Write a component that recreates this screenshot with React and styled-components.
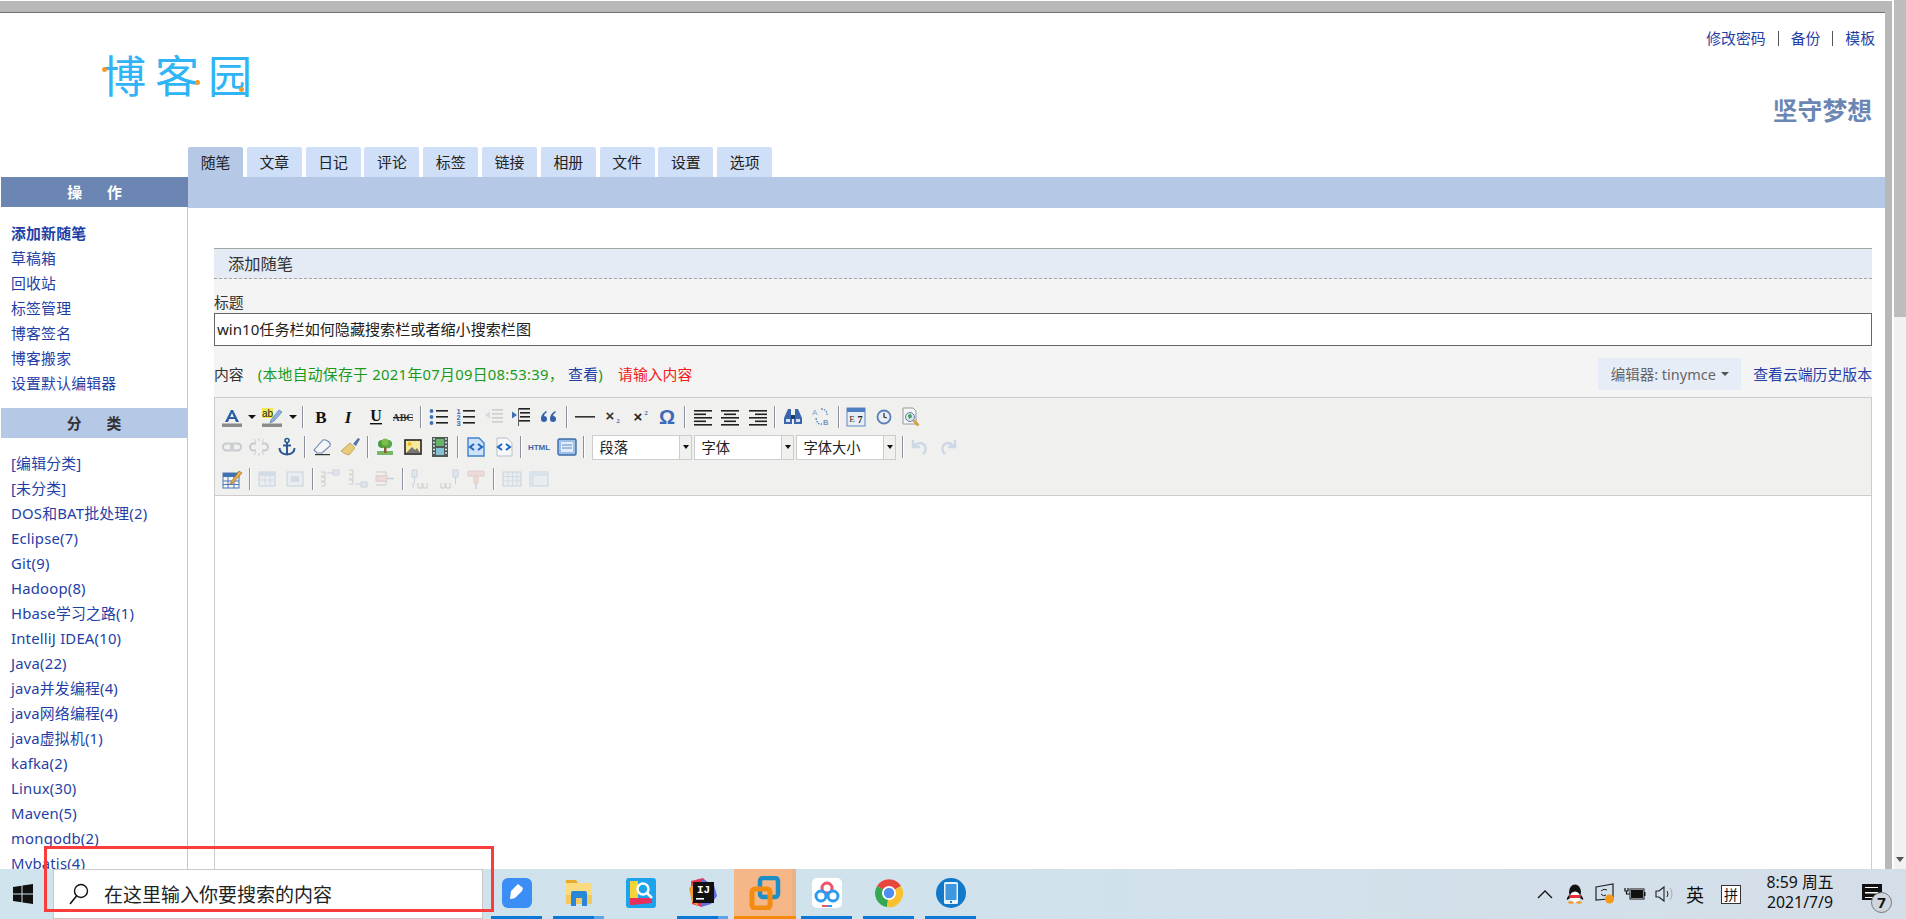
import React from 'react';
import styled, { createGlobalStyle } from 'styled-components';

const GlobalStyle = createGlobalStyle`
  html, body {
    margin: 0;
    padding: 0;
    height: 100%;
    overflow: hidden;
    background: #fff;
    font-family: "Noto Sans", "Noto Sans CJK SC", sans-serif;
  }
  #root { height: 100%; }
  * { box-sizing: border-box; }
`;

const Screen = styled.div`
  position: relative;
  height: 919px;
  width: 1906px;
  display: flex;
  flex-direction: column;
  overflow: hidden;
  background: #fff;
`;

const Desktop = styled.div`
  flex: 1;
  min-height: 0;
  display: flex;
`;

const Frame = styled.div`
  width: 1892px;
  margin-top: 1px;
  display: flex;
  flex-direction: column;
  background: #b8b8b8;
  padding: 11px 7px 0 0;
  min-height: 0;
`;

const Page = styled.div`
  flex: 1;
  min-height: 0;
  background: #fff;
  border-top: 1px solid #707070;
  display: flex;
  flex-direction: column;
  font-size: 14.85px;
  line-height: 25px;
  color: #333;
`;

const Scrollbar = styled.div`
  width: 12px;
  margin-left: 2px;
  background: #f1f1f1;
  position: relative;
`;

const ScrollThumb = styled.div`
  height: 317px;
  background: #bdbdbd;
`;

const ScrollArrow = styled.div`
  position: absolute;
  left: 2px;
  bottom: 7px;
  border-left: 4px solid transparent;
  border-right: 4px solid transparent;
  border-top: 5px solid #555;
`;

const Header = styled.div`
  height: 134px;
  flex: none;
  display: flex;
  justify-content: space-between;
  padding: 0 10px 0 102px;
`;

const Logo = styled.div`
  position: relative;
  margin-top: 35px;
  width: 150px;
  height: 56px;
  font-size: 44px;
  line-height: 56px;
  letter-spacing: 9px;
  font-weight: 400;
  color: #2fb4f6;
  white-space: nowrap;
`;

const LogoDot = styled.i`
  position: absolute;
  width: 5px;
  height: 5px;
  border-radius: 50%;
  background: #f89a2c;
  left: ${p => p.$x}px;
  top: ${p => p.$y}px;
`;

const HeaderRight = styled.div`
  display: flex;
  flex-direction: column;
  align-items: flex-end;
`;

const TopLinks = styled.div`
  margin-top: 13px;
  display: flex;
  align-items: center;
  height: 25px;
`;

const TopSep = styled.span`
  width: 1px;
  height: 15px;
  background: #555;
  margin: 0 12px;
`;

const Link = styled.a`
  color: #1f3fa6;
  text-decoration: none;
  font-weight: ${p => (p.$bold ? 700 : 400)};
  white-space: nowrap;
`;

const BlogTitle = styled.div`
  margin: 42px 3px 0 0;
  font-size: 24.8px;
  line-height: 34px;
  font-weight: 700;
  color: #6b86b2;
`;

const Tabs = styled.div`
  flex: none;
  display: flex;
  gap: 3.8px;
  height: 30px;
  padding-left: 188px;
`;

const Tab = styled.div`
  width: 55px;
  height: 30px;
  text-align: center;
  line-height: 31px;
  border-radius: 2px 2px 0 0;
  color: #222;
  background: ${p => (p.$active ? '#b5c8e6' : '#cfdff7')};
`;

const Body = styled.div`
  flex: 1;
  min-height: 0;
  display: flex;
  overflow: hidden;
`;

const Sidebar = styled.div`
  width: 188px;
  flex: none;
  padding-left: 1px;
  border-right: 1px solid #b5c8e6;
`;

const SideHead = styled.div`
  height: 30px;
  line-height: 30px;
  text-align: center;
  font-weight: 700;
  letter-spacing: 25px;
  text-indent: 25px;
  color: ${p => (p.$dark ? '#fff' : '#333')};
  background: ${p => (p.$dark ? '#6b86b2' : '#b5c8e6')};
  margin-right: ${p => (p.$dark ? '-1px' : '0')};
`;

const SideList = styled.div`
  display: flex;
  flex-direction: column;
  padding: ${p => p.$top}px 0 ${p => 26 - p.$top}px 10px;
  letter-spacing: .2px;
`;

const Content = styled.div`
  flex: 1;
  min-width: 0;
  display: flex;
  flex-direction: column;
`;

const BlueBand = styled.div`
  height: 31px;
  flex: none;
  background: #b5c8e6;
`;

const Main = styled.div`
  flex: 1;
  margin: 40px 13px 0 26px;
  background: #f4f4f4;
  display: flex;
  flex-direction: column;
`;

const SectionTitle = styled.div`
  height: 31px;
  background: #e4ebf5;
  border-top: 1px solid #a5a5a5;
  border-bottom: 1px dashed #a5a5a5;
  padding-left: 14px;
  font-size: 16.3px;
  line-height: 30px;
  color: #333;
`;

const FieldLabel = styled.div`
  margin-top: 10px;
  height: 24px;
  line-height: 26px;
`;

const TitleInput = styled.div`
  height: 33px;
  border: 1px solid #666;
  background: #fff;
  padding-left: 2px;
  font-size: 15.1px;
  line-height: 30px;
  color: #222;
`;

const MetaRow = styled.div`
  height: 51px;
  padding: 12px 0 7px;
  display: flex;
  align-items: center;
  white-space: nowrap;
`;

const SaveNote = styled.span`
  margin-left: 14px;
  letter-spacing: .27px;
  color: #1a9a1a;
`;

const ErrorNote = styled.span`
  margin-left: 15px;
  color: #f21c1c;
`;

const EditorPick = styled.div`
  margin-left: auto;
  width: 143px;
  height: 32px;
  background: #e6edf7;
  display: flex;
  align-items: center;
  justify-content: center;
  gap: 5px;
  color: #666;
  font-size: 14.5px;
`;

const PickCaret = styled.i`
  border-left: 4px solid transparent;
  border-right: 4px solid transparent;
  border-top: 4px solid #555;
`;

const HistoryLink = styled(Link)`
  margin-left: 12px;
  font-size: 14.85px;
`;

const Editor = styled.div`
  flex: 1;
  border: 1px solid #ccc;
  border-bottom: 0;
  background: #fff;
`;

const Toolbar = styled.div`
  height: 98px;
  background: #f0f0ee;
  border-bottom: 1px solid #ccc;
  padding: 4px 0 0 3px;
`;

const ToolRow = styled.div`
  height: ${p => p.$h}px;
  display: flex;
  align-items: center;
`;

const ToolBtn = styled.span`
  width: 27.5px;
  height: 22px;
  flex: none;
  display: flex;
  align-items: center;
  justify-content: center;
  opacity: ${p => (p.$off ? 0.35 : 1)};
`;

const ToolCaret = styled.span`
  width: 13px;
  flex: none;
  display: flex;
  justify-content: center;
  &::before {
    content: "";
    border-left: 4px solid transparent;
    border-right: 4px solid transparent;
    border-top: 4px solid #111;
  }
`;

const ToolSep = styled.span`
  width: 8.1px;
  height: 22px;
  flex: none;
  display: flex;
  justify-content: center;
  &::before {
    content: "";
    width: 2px;
    background: linear-gradient(90deg, #8d8fa0 50%, #fff 50%);
  }
`;

const Select = styled.div`
  width: 100px;
  height: 25px;
  flex: none;
  margin-right: 2px;
  display: flex;
  border: 1px solid #ccc;
  background: #fff;
  font-size: 14.3px;
  line-height: 23px;
  color: #222;
  ${p => p.$first && 'margin-left: 4px;'}
`;

const SelectText = styled.span`
  flex: 1;
  padding-left: 6px;
`;

const SelectBtn = styled.span`
  width: 12px;
  background: #f0f0ee;
  border-left: 1px solid #ccc;
  display: flex;
  align-items: center;
  justify-content: center;
  &::before {
    content: "";
    border-left: 3.5px solid transparent;
    border-right: 3.5px solid transparent;
    border-top: 4px solid #111;
  }
`;

const Taskbar = styled.div`
  height: 50px;
  flex: none;
  display: flex;
  background: linear-gradient(90deg, #cfe4ec 0%, #d0e2ec 45%, #d4dee9 100%);
`;

const StartBtn = styled.div`
  width: 53px;
  flex: none;
  display: flex;
  align-items: center;
  justify-content: center;
  padding-right: 8px;
`;

const SearchBox = styled.div`
  width: 430px;
  flex: none;
  display: flex;
  align-items: center;
  gap: 14px;
  background: #fff;
  border: 1px solid #c9c9c9;
  padding-left: 14px;
  font-size: 19px;
  color: #222;
`;

const Tiles = styled.div`
  display: flex;
  margin-left: 3px;
`;

const Tile = styled.div`
  position: relative;
  width: 62px;
  display: flex;
  align-items: center;
  justify-content: center;
  padding-bottom: 3px;
  background: ${p => (p.$active ? '#f5b688' : 'transparent')};
  ${p => p.$active && 'border-right: 4px solid #ecb083; padding-left: 4px;'}
`;

const TileBar = styled.i`
  position: absolute;
  bottom: 0;
  height: 3px;
  left: ${p => (p.$active ? 0 : 5)}px;
  right: ${p => (p.$active ? -4 : 6)}px;
  background: ${p => (p.$active ? '#f8890f' : p.$stack ? 'linear-gradient(90deg, #0a78d7 80%, #5aa6e8 80%)' : '#0a78d7')};
`;

const Tray = styled.div`
  margin-left: auto;
  display: flex;
  align-items: center;
  color: #111;
`;

const TrayIcon = styled.div`
  width: ${p => p.$w || 30}px;
  display: flex;
  justify-content: center;
  font-size: 18px;
`;

const ImeBox = styled.div`
  width: 20px;
  height: 19px;
  margin: 0 0 0 11px;
  border: 1px solid #333;
  background: #fff;
  font-size: 14px;
  line-height: 17px;
  text-align: center;
`;

const Clock = styled.div`
  width: 92px;
  margin-left: 13px;
  padding-bottom: 4px;
  text-align: center;
  font-size: 15.8px;
  line-height: 20px;
`;

const Notify = styled.div`
  position: relative;
  width: 60px;
  height: 50px;
`;

const NotifyBubble = styled.i`
  position: absolute;
  left: 16px;
  top: 15px;
  width: 20px;
  height: 16px;
  background: #111;
  &::after {
    content: "";
    position: absolute;
    left: 3px;
    top: 3px;
    width: 13px;
    height: 9px;
    border-top: 1.5px solid #fff;
    border-bottom: 1.5px solid #fff;
    background: linear-gradient(#fff, #fff) center / 100% 1.5px no-repeat;
  }
`;

const NotifyBadge = styled.b`
  position: absolute;
  left: 25px;
  top: 23px;
  width: 21px;
  height: 21px;
  border-radius: 50%;
  border: 1px solid #777;
  background: #cfd6de;
  color: #111;
  text-align: center;
  font-size: 15px;
  line-height: 19px;
`;

const RedBox = styled.div`
  position: absolute;
  left: 44px;
  top: 846px;
  width: 450px;
  height: 66px;
  border: 3px solid #f93c3c;
  pointer-events: none;
`;

const S = ({ children, size = 20 }) => (
  <svg width={size} height={size} viewBox="0 0 20 20">{children}</svg>
);

const lines = (rows, color = '#222') => rows.map(([x, y, w], i) => (
  <rect key={i} x={x} y={y} width={w} height="1.6" fill={color} />
));

const t = (x, y, str, size, extra = {}) => (
  <text x={x} y={y} fontSize={size} fontFamily="Liberation Serif, serif" textAnchor="middle" {...extra}>{str}</text>
);

const tableIcon = (fill = '#9fb6d6') => (
  <g>
    <rect x="2" y="3" width="16" height="14" fill="#dfe8f4" stroke="#7f9bc0" />
    <rect x="2" y="3" width="16" height="4" fill={fill} />
    <path d="M2 11h16M8 7v10M13 7v10" stroke="#9fb6d6" />
  </g>
);

const gridDiagram = (d, d2, color = '#8a8a8a') => (
  <g fill="none" stroke={color}>
    <path d={d} />
    <path d={d2} stroke="#7f9bc0" fill="#c5d6ec" />
  </g>
);

const icons = {
  forecolor: <S><path d="M3 15L9 3h2l6 12h-3l-1.3-3H7.3L6 15zM8.2 10h3.6L10 6z" fill="#2d5ea8" /><rect x="0" y="16.5" width="20" height="3.5" fill="#8c8c8c" /></S>,
  backcolor: <S><rect x="0" y="1" width="11" height="10" fill="#f2ea55" />{t(5.5, 9.5, 'ab', 10, { fontFamily: 'Liberation Sans, sans-serif', fill: '#222' })}<path d="M9 13l8-10 3 2-8 9-4 2z" fill="#8fb2de" stroke="#4d78b5" strokeWidth=".7" /><rect x="0" y="16.5" width="20" height="3.5" fill="#8c8c8c" /></S>,
  bold: <S>{t(10, 16, 'B', 17, { fontWeight: 700, fill: '#111' })}</S>,
  italic: <S>{t(10, 16, 'I', 17, { fontWeight: 700, fontStyle: 'italic', fill: '#111' })}</S>,
  underline: <S>{t(10, 14, 'U', 16, { fontWeight: 700, fill: '#111' })}<rect x="4" y="16" width="12" height="1.4" fill="#111" /></S>,
  strike: <S>{t(10, 14, 'ABC', 10, { fontWeight: 700, fill: '#333' })}<rect x="0" y="10" width="20" height="1" fill="#222" /></S>,
  bullist: <S><circle cx="2.5" cy="4" r="1.9" fill="#3f6fb5" /><circle cx="2.5" cy="10" r="1.9" fill="#3f6fb5" /><circle cx="2.5" cy="16" r="1.9" fill="#3f6fb5" />{lines([[7, 3, 12], [7, 9, 12], [7, 15, 12]])}</S>,
  numlist: <S>{['1', '2', '3'].map((n, i) => <text key={n} x="0.5" y={6.5 + i * 6} fontSize="7.5" fontWeight="700" fill="#3f6fb5" fontFamily="Liberation Sans, sans-serif">{n}</text>)}{lines([[7, 3, 12], [7, 9, 12], [7, 15, 12]])}</S>,
  outdent: <S><g opacity=".45">{lines([[8, 2, 11], [8, 6, 11], [8, 10, 11], [8, 14, 11]])}<path d="M1 8l5-3.5v7z" fill="#3f6fb5" /></g></S>,
  indent: <S>{lines([[7, 1, 12], [9, 5, 10], [9, 9, 10], [7, 13, 12]])}<path d="M6 8L1 4.5v7z" fill="#3f6fb5" /><rect x="7" y="1" width="1" height="18" fill="#666" /></S>,
  quote: <S><path d="M7 4Q2 7 2 12a3 3 0 1 0 3-3q0-2 3-4zM16 4q-5 3-5 8a3 3 0 1 0 3-3q0-2 3-4z" fill="#3560a8" /></S>,
  hr: <S><rect x="0" y="9" width="20" height="1.6" fill="#333" /></S>,
  sub: <S>{t(8, 14, '×', 15, { fontWeight: 700, fill: '#333', fontFamily: 'Liberation Sans, sans-serif' })}{t(16, 16, '2', 7, { fontWeight: 700, fill: '#3f6fb5' })}</S>,
  sup: <S>{t(8, 15, '×', 15, { fontWeight: 700, fill: '#222', fontFamily: 'Liberation Sans, sans-serif' })}{t(16, 8, '2', 7, { fontWeight: 700, fill: '#3f6fb5' })}</S>,
  omega: <S>{t(10, 17, 'Ω', 20, { fontWeight: 700, fill: '#3b69b8', fontFamily: 'Liberation Sans, sans-serif' })}</S>,
  left: <S>{lines([[1, 3, 18], [1, 6.5, 12], [1, 10, 18], [1, 13.5, 12], [1, 17, 18]])}</S>,
  center: <S>{lines([[1, 3, 18], [4, 6.5, 12], [1, 10, 18], [4, 13.5, 12], [1, 17, 18]])}</S>,
  right: <S>{lines([[1, 3, 18], [7, 6.5, 12], [1, 10, 18], [7, 13.5, 12], [1, 17, 18]])}</S>,
  search: <S><path d="M5 2h3v6l1 2v7H1v-6zM12 2h3l4 9v6h-8v-7l1-2z" fill="#3a66ad" /><rect x="8" y="8" width="4" height="4" fill="#1e3c70" /><rect x="3" y="12" width="4" height="3" fill="#cfe0f5" /><rect x="13" y="12" width="4" height="3" fill="#cfe0f5" /></S>,
  replace: <S><g fill="#7fa3d8" fontFamily="Liberation Sans, sans-serif" fontSize="8"><text x="1" y="8">A</text><text x="12" y="18" fill="#3f6fb5">B</text></g><path d="M5 11q1 7 6 6M10 2q6 0 6 6" fill="none" stroke="#4e7dc4" strokeDasharray="1.6 1.2" strokeWidth="1.3" /></S>,
  date: <S><rect x="1" y="1" width="18" height="18" fill="#e9eef6" stroke="#5e86bd" /><rect x="1" y="1" width="18" height="4" fill="#4f7fc0" />{t(6, 15, 'E', 9, { fill: '#333' })}{t(14, 16, '7', 10, { fontWeight: 700, fill: '#222' })}</S>,
  clock: <S><circle cx="10" cy="10" r="6.5" fill="#e8eef8" stroke="#5c7fb6" strokeWidth="1.8" /><path d="M10 6v4l3 1" fill="none" stroke="#333" strokeWidth="1.3" /></S>,
  preview: <S><path d="M2 1h10l3 3v13H2z" fill="#f6f7f9" stroke="#999" /><circle cx="9" cy="10" r="4.5" fill="#d5e5f5" stroke="#6d7f95" /><path d="M7 8l3-1 1 3-3 2z" fill="#3d9c4d" /><path d="M12.5 13.5l5 5" stroke="#d6a240" strokeWidth="2.6" /></S>,
  link: <S><rect x="1" y="6.5" width="10" height="7" rx="3.5" fill="none" stroke="#7c8794" strokeWidth="2" /><rect x="9" y="6.5" width="10" height="7" rx="3.5" fill="none" stroke="#7c8794" strokeWidth="2" /></S>,
  unlink: <S><path d="M7 6.5H4.5a3.5 3.5 0 0 0 0 7H7M13 6.5h2.5a3.5 3.5 0 0 1 0 7H13" fill="none" stroke="#7c8794" strokeWidth="2" /><path d="M10 1v3M10 16v3M5 2l2 3M15 2l-2 3M5 18l2-3M15 18l-2-3" stroke="#888" /></S>,
  anchor: <S><circle cx="10" cy="3.5" r="2" fill="none" stroke="#2d5a94" strokeWidth="1.6" /><path d="M10 5.5V17M6 8.5h8" stroke="#2d5a94" strokeWidth="2" /><path d="M2.5 11q0 6 7.5 6.5q7.5-.5 7.5-6.5" fill="none" stroke="#2d5a94" strokeWidth="2" /></S>,
  eraser: <S><path d="M2 13L11 3q2-1 6 2 2 2 1 4l-8 7H5z" fill="#f5f6f8" stroke="#6a88ad" strokeWidth="1.1" /><rect x="3" y="17" width="15" height="1.2" fill="#333" /></S>,
  brush: <S><path d="M13 7l5-6 2 1-4 7z" fill="#5274a8" /><path d="M1 14l9-8 5 5-6 7q-5-1-8-4z" fill="#e8cb7b" stroke="#b1924a" strokeWidth=".7" /></S>,
  image: <S><rect x="1" y="1" width="18" height="18" fill="#eef3fa" /><path d="M2 14h16v4H2z" fill="#7bb662" /><rect x="9" y="10" width="2.5" height="6" fill="#8a5d30" /><circle cx="7" cy="7" r="4" fill="#4f9d3a" /><circle cx="13" cy="7" r="4.2" fill="#5aa843" /><circle cx="10" cy="5" r="3.5" fill="#7bbf4a" /></S>,
  picture: <S><rect x="2" y="3" width="16" height="14" fill="#f7e99a" stroke="#222" strokeWidth="1.6" /><circle cx="6.5" cy="7" r="2" fill="#f4b92e" /><path d="M3 16l6-6 3 3 2-2 3 5z" fill="#777" /></S>,
  film: <S><rect x="2" y="0" width="16" height="20" fill="#4f5a57" /><rect x="6" y="2" width="8" height="7" fill="#68b36a" /><rect x="6" y="11" width="8" height="7" fill="#86c1d8" /><path d="M3 2h2M3 5.5h2M3 9h2M3 12.5h2M3 16h2M15 2h2M15 5.5h2M15 9h2M15 12.5h2M15 16h2" stroke="#dfe6e6" strokeWidth="1.4" /></S>,
  codeBlue: <S><path d="M2 1h11l5 5v13H2z" fill="#cfe2f8" stroke="#3f82cf" strokeWidth="1.4" /><path d="M8 7l-4 3 4 3M12 7l4 3-4 3" fill="none" stroke="#2067bf" strokeWidth="2" /></S>,
  codeWhite: <S><path d="M3 1h10l5 5v13H3z" fill="#f7f8fa" stroke="#b9c0c9" /><path d="M8 7l-4 3 4 3M12 7l4 3-4 3" fill="none" stroke="#2067bf" strokeWidth="2" /></S>,
  html: <svg width="24" height="20" viewBox="0 0 24 20"><text x="12" y="13" textAnchor="middle" fontSize="8" fontWeight="700" fill="#3a65a6" fontFamily="Liberation Sans, sans-serif">HTML</text></svg>,
  full: <S><rect x="1" y="2" width="18" height="16" rx="1.5" fill="#9fc0e8" stroke="#3a6cab" strokeWidth="1.4" /><rect x="4" y="5" width="12" height="10" fill="#e3edf9" /><path d="M5 8h10M5 11h10" stroke="#5c8ac4" /></S>,
  undo: <S><path d="M3 3v7h7M4 9q7-6 11 0 2 4-2 8" fill="none" stroke="#8daedb" strokeWidth="2.4" /></S>,
  redo: <S><path d="M17 3v7h-7M16 9Q9 3 5 9q-2 4 2 8" fill="none" stroke="#8daedb" strokeWidth="2.4" /></S>,
  tableEdit: <S><rect x="1" y="4" width="16" height="15" fill="#f2f5fa" stroke="#4f78ad" /><rect x="1" y="4" width="16" height="4" fill="#3f71b5" /><path d="M1 12h16M1 15.5h16M6 8v11M12 8v11" stroke="#4f78ad" /><path d="M9 13l8-11 3 2-9 10-3 1z" fill="#e8b04a" stroke="#a46a22" strokeWidth=".7" /></S>,
  tableA: <S>{tableIcon()}</S>,
  tableB: <S><rect x="2" y="3" width="16" height="14" fill="#dfe8f4" stroke="#7f9bc0" /><rect x="6" y="7" width="8" height="6" fill="#9fb6d6" /></S>,
  rowA: <S>{gridDiagram('M1 3h4v4H1M1 8h4v4H1M1 13h4v4H1', 'M13 1h6v5h-6z')}<path d="M7 4h6" stroke="#7f9bc0" /></S>,
  rowB: <S>{gridDiagram('M1 1h4v4H1M1 6h4v4H1M1 11h4v4H1', 'M13 13h6v5h-6z')}<path d="M7 15h6" stroke="#7f9bc0" /></S>,
  rowC: <S><g fill="none" stroke="#8a8a8a"><path d="M1 3h10v4H1M1 12h10v4H1" /></g><rect x="1" y="7" width="11" height="5" fill="#eab6b6" stroke="#c98a8a" /><path d="M12 9.5h7" stroke="#7f9bc0" strokeWidth="1.6" /></S>,
  colA: <S>{gridDiagram('M7 14v5h4v-5M12 14v5h4v-5', 'M1 1h5v7H1z')}<path d="M3.5 8v7" stroke="#7f9bc0" /><path d="M2 14v5" stroke="#8a8a8a" /></S>,
  colB: <S>{gridDiagram('M2 14v5h4v-5M7 14v5h4v-5', 'M14 1h5v7h-5z')}<path d="M16.5 8v7" stroke="#7f9bc0" /></S>,
  colC: <S><path d="M2 2h16v5H2z" fill="#eab6b6" stroke="#c98a8a" /><rect x="8" y="7" width="4" height="7" fill="#eab6b6" stroke="#c98a8a" /><path d="M10 14v6" stroke="#7f9bc0" strokeWidth="1.6" /></S>,
  gridA: <S><rect x="1" y="3" width="18" height="14" fill="#dfe8f4" stroke="#7f9bc0" /><path d="M1 7.5h18M1 12h18M6 3v14M10.5 3v14M15 3v14" stroke="#9fb6d6" /></S>,
  gridB: <S><rect x="1" y="3" width="18" height="14" fill="#dfe8f4" stroke="#7f9bc0" /><rect x="1" y="3" width="18" height="4" fill="#b4c9e6" /><rect x="1" y="3" width="4" height="14" fill="#b4c9e6" /></S>,
};

const row1 = ['forecolor', '^', 'backcolor', '^', '|', 'bold', 'italic', 'underline', 'strike', '|', 'bullist', 'numlist', '-outdent', 'indent', 'quote', '|', 'hr', 'sub', 'sup', 'omega', '|', 'left', 'center', 'right', '|', 'search', 'replace', '|', 'date', 'clock', 'preview'];
const row2 = ['-link', '-unlink', 'anchor', '|', 'eraser', 'brush', '|', 'image', 'picture', 'film', '|', 'codeBlue', 'codeWhite', '|', 'html', 'full', '|'];
const row2End = ['|', '-undo', '-redo'];
const row3 = ['tableEdit', '|', '-tableA', '-tableB', '|', '-rowA', '-rowB', '-rowC', '|', '-colA', '-colB', '-colC', '|', '-gridA', '-gridB'];

function renderTools(list) {
  return list.map((id, i) => {
    if (id === '|') return <ToolSep key={i} />;
    if (id === '^') return <ToolCaret key={i} />;
    const off = id[0] === '-';
    return <ToolBtn key={i} $off={off}>{icons[off ? id.slice(1) : id]}</ToolBtn>;
  });
}

const tabs = ['随笔', '文章', '日记', '评论', '标签', '链接', '相册', '文件', '设置', '选项'];
const actions = ['添加新随笔', '草稿箱', '回收站', '标签管理', '博客签名', '博客搬家', '设置默认编辑器'];
const categories = ['[编辑分类]', '[未分类]', 'DOS和BAT批处理(2)', 'Eclipse(7)', 'Git(9)', 'Hadoop(8)', 'Hbase学习之路(1)', 'IntelliJ IDEA(10)', 'Java(22)', 'java并发编程(4)', 'java网络编程(4)', 'java虚拟机(1)', 'kafka(2)', 'Linux(30)', 'Maven(5)', 'mongodb(2)', 'Mybatis(4)'];

const tileIcons = [
  <svg key="a" width="30" height="30" viewBox="0 0 30 30"><rect width="30" height="30" rx="6" fill="#3a8ef6" /><path d="M8 21l1-8 7-7 5 4-1 3-7 7q-3 1-5 1z" fill="#fff" /></svg>,
  <svg key="b" width="30" height="30" viewBox="0 0 30 30"><path d="M2 2h10l2 3H2z" fill="#e8a92f" /><rect x="2" y="5" width="26" height="21" fill="#f9dc80" /><rect x="2" y="17" width="26" height="9" fill="#f2c95c" /><path d="M7 28V15q0-2 2-2h12q2 0 2 2v13h-5v-8h-6v8z" fill="#2a86d8" /></svg>,
  <svg key="c" width="30" height="30" viewBox="0 0 30 30"><rect width="30" height="30" rx="3" fill="#1ca3ec" /><path d="M4 3h8v17H4z" fill="#f4d23c" /><path d="M4 20h22v5L6 27H4z" fill="#e8305c" /><circle cx="17" cy="11" r="5.5" fill="none" stroke="#fff" strokeWidth="2.5" /><path d="M21 15l5 5" stroke="#fff" strokeWidth="2.5" /></svg>,
  <svg key="d" width="30" height="30" viewBox="0 0 30 30"><path d="M3 3l12-3 5 5-6 24-10-3z" fill="#e8344f" /><path d="M14 1l12 6 3 11-6 8-10 3z" fill="#5f6fdc" /><path d="M1 10l6-4 3 22-6-4z" fill="#f39a2b" /><rect x="5" y="4" width="21" height="21" fill="#111" /><text x="15.5" y="15" textAnchor="middle" fontSize="11" fontWeight="700" fill="#fff" fontFamily="Liberation Mono, monospace">IJ</text><rect x="8" y="20" width="8" height="1.6" fill="#fff" /></svg>,
  <svg key="e" width="32" height="34" viewBox="0 0 32 34"><rect x="11" y="2" width="18" height="19" rx="3" fill="none" stroke="#1e8ec6" strokeWidth="4.5" /><rect x="3" y="13" width="18" height="19" rx="3" fill="none" stroke="#f28c13" strokeWidth="5" /></svg>,
  <svg key="f" width="30" height="30" viewBox="0 0 30 30"><rect width="30" height="30" rx="5" fill="#fff" /><circle cx="15" cy="10" r="5" fill="none" stroke="#f0516a" strokeWidth="3" /><circle cx="9" cy="18" r="5" fill="none" stroke="#2c9cf0" strokeWidth="3" /><circle cx="21" cy="18" r="5" fill="none" stroke="#2c9cf0" strokeWidth="3" /><rect x="10" y="27" width="5" height="2" fill="#f0516a" /><rect x="15" y="27" width="5" height="2" fill="#2c9cf0" /></svg>,
  <svg key="g" width="30" height="30" viewBox="0 0 30 30"><path d="M15 15L3 8A14 14 0 0 1 27 8z" fill="#e8453c" /><path d="M15 15L3 8a14 14 0 0 0 10 21z" fill="#34a853" /><path d="M15 15l12-7A14 14 0 0 1 13 29z" fill="#fbc02d" /><circle cx="15" cy="15" r="7" fill="#fff" /><circle cx="15" cy="15" r="5.2" fill="#4f8ef0" /></svg>,
  <svg key="h" width="30" height="30" viewBox="0 0 30 30"><circle cx="15" cy="15" r="15" fill="#1278c8" /><rect x="8" y="4" width="14" height="22" rx="1.5" fill="#e9f3fb" /><rect x="9.5" y="6" width="11" height="16" fill="#3f97e0" /><rect x="14" y="23" width="2" height="2" fill="#1278c8" /></svg>,
];

export default function App() {
  return (
    <Screen>
      <GlobalStyle />
      <Desktop>
        <Frame>
          <Page>
            <Header>
              <Logo>
                博客园
                <LogoDot $x={0} $y={19} />
                <LogoDot $x={93} $y={32} />
                <LogoDot $x={137} $y={39} />
              </Logo>
              <HeaderRight>
                <TopLinks>
                  <Link>修改密码</Link>
                  <TopSep />
                  <Link>备份</Link>
                  <TopSep />
                  <Link>模板</Link>
                </TopLinks>
                <BlogTitle>坚守梦想</BlogTitle>
              </HeaderRight>
            </Header>
            <Tabs>
              {tabs.map((tab, i) => <Tab key={tab} $active={i === 0}>{tab}</Tab>)}
            </Tabs>
            <Body>
              <Sidebar>
                <SideHead $dark>操作</SideHead>
                <SideList $top={14}>
                  {actions.map((a, i) => <Link key={a} $bold={i === 0}>{a}</Link>)}
                </SideList>
                <SideHead>分类</SideHead>
                <SideList $top={13}>
                  {categories.map(c => <Link key={c}>{c}</Link>)}
                </SideList>
              </Sidebar>
              <Content>
                <BlueBand />
                <Main>
                  <SectionTitle>添加随笔</SectionTitle>
                  <FieldLabel>标题</FieldLabel>
                  <TitleInput>win10任务栏如何隐藏搜索栏或者缩小搜索栏图</TitleInput>
                  <MetaRow>
                    内容
                    <SaveNote>(本地自动保存于 2021年07月09日08:53:39， <Link>查看</Link>)</SaveNote>
                    <ErrorNote>请输入内容</ErrorNote>
                    <EditorPick>编辑器: tinymce<PickCaret /></EditorPick>
                    <HistoryLink>查看云端历史版本</HistoryLink>
                  </MetaRow>
                  <Editor>
                    <Toolbar>
                      <ToolRow $h={29}>{renderTools(row1)}</ToolRow>
                      <ToolRow $h={32}>
                        {renderTools(row2)}
                        <Select $first><SelectText>段落</SelectText><SelectBtn /></Select>
                        <Select><SelectText>字体</SelectText><SelectBtn /></Select>
                        <Select><SelectText>字体大小</SelectText><SelectBtn /></Select>
                        {renderTools(row2End)}
                      </ToolRow>
                      <ToolRow $h={32}>{renderTools(row3)}</ToolRow>
                    </Toolbar>
                  </Editor>
                </Main>
              </Content>
            </Body>
          </Page>
        </Frame>
        <Scrollbar>
          <ScrollThumb />
          <ScrollArrow />
        </Scrollbar>
      </Desktop>
      <Taskbar>
        <StartBtn>
          <svg width="20" height="20" viewBox="0 0 20 20"><path d="M0 3l8.5-1.3V9.5H0zM9.5 1.5L20 0v9.5H9.5zM0 10.5h8.5v7.8L0 17zM9.5 10.5H20V20L9.5 18.5z" fill="#111" /></svg>
        </StartBtn>
        <SearchBox>
          <svg width="22" height="24" viewBox="0 0 22 24"><circle cx="13" cy="9" r="6.5" fill="none" stroke="#111" strokeWidth="1.4" /><path d="M8.5 14L2 22" stroke="#111" strokeWidth="1.6" /></svg>
          在这里输入你要搜索的内容
        </SearchBox>
        <Tiles>
          {tileIcons.map((ic, i) => (
            <Tile key={i} $active={i === 4}>
              {ic}
              {i !== 2 && <TileBar $active={i === 4} $stack={i === 1 || i === 3} />}
            </Tile>
          ))}
        </Tiles>
        <Tray>
          <TrayIcon>
            <svg width="16" height="10" viewBox="0 0 16 10"><path d="M1 9l7-7 7 7" fill="none" stroke="#111" strokeWidth="1.3" /></svg>
          </TrayIcon>
          <TrayIcon>
            <svg width="18" height="20" viewBox="0 0 18 20"><ellipse cx="9" cy="8" rx="6" ry="7.5" fill="#111" /><ellipse cx="9" cy="13" rx="5" ry="5.5" fill="#fff" /><path d="M3 11h12l-1 3H4z" fill="#e8303a" /><path d="M3 11q-3 4-2 5l3-2zM15 11q3 4 2 5l-3-2z" fill="#111" /><ellipse cx="5" cy="18.5" rx="3" ry="1.2" fill="#f39a2b" /><ellipse cx="13" cy="18.5" rx="3" ry="1.2" fill="#f39a2b" /></svg>
          </TrayIcon>
          <TrayIcon>
            <svg width="22" height="22" viewBox="0 0 22 22"><path d="M2 4l17-3v13l-5 2-12 1z" fill="none" stroke="#222" strokeWidth="1.2" /><path d="M7 8q3-3 6-1M12 12q-3 2-5-1" fill="none" stroke="#222" /><circle cx="15.5" cy="16" r="4.5" fill="#f79a1a" /></svg>
          </TrayIcon>
          <TrayIcon>
            <svg width="22" height="14" viewBox="0 0 22 14"><path d="M1 1v3h3V1M2.5 4v3H6" fill="none" stroke="#111" strokeWidth="1.2" /><rect x="6" y="2" width="14" height="10" fill="#fff" stroke="#111" /><rect x="7" y="3" width="12" height="8" fill="#111" /><rect x="20" y="5" width="1.5" height="4" fill="#111" /></svg>
          </TrayIcon>
          <TrayIcon>
            <svg width="20" height="18" viewBox="0 0 20 18"><path d="M1 6h3l5-4v14l-5-4H1z" fill="none" stroke="#222" strokeWidth="1.1" /><path d="M12 6q2 3 0 6" fill="none" stroke="#222" /><path d="M15 3q4 6 0 12" fill="none" stroke="#aaa" /></svg>
          </TrayIcon>
          <TrayIcon>英</TrayIcon>
          <ImeBox>拼</ImeBox>
          <Clock>
            <div>8:59 周五</div>
            <div>2021/7/9</div>
          </Clock>
          <Notify>
            <NotifyBubble />
            <NotifyBadge>7</NotifyBadge>
          </Notify>
        </Tray>
      </Taskbar>
      <RedBox />
    </Screen>
  );
}
